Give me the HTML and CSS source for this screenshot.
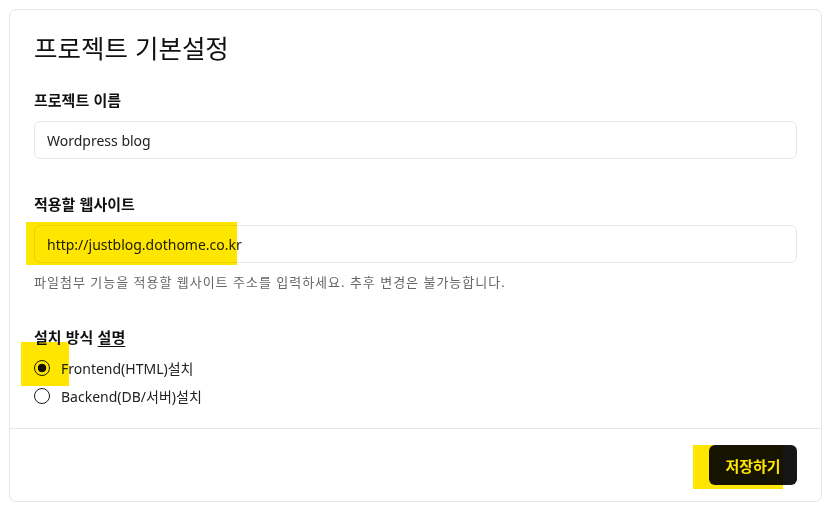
FILE: index.html
```html
<!DOCTYPE html>
<html lang="ko">
<head>
<meta charset="utf-8">
<link rel="stylesheet" href="styles.css">
</head>
<body>
<div class="card">
  <div class="card-body">
    <h1 class="title">프로젝트 기본설정</h1>
    <div class="field">
      <label class="label">프로젝트 이름</label>
      <div class="input">Wordpress blog</div>
    </div>
    <div class="field field-2">
      <label class="label">적용할 웹사이트</label>
      <div class="input">http://justblog.dothome.co.kr</div>
      <p class="help">파일첨부 기능을 적용할 웹사이트 주소를 입력하세요. 추후 변경은 불가능합니다.</p>
    </div>
    <div class="field field-3">
      <div class="label">설치 방식 <span class="u">설명</span></div>
      <label class="radio-row"><input type="radio" name="m" checked><span>Frontend(HTML)설치</span></label>
      <label class="radio-row"><input type="radio" name="m"><span>Backend(DB/서버)설치</span></label>
    </div>
  </div>
  <div class="card-footer">
    <button class="btn">저장하기</button>
  </div>
</div>
<div class="hl hl-input"></div>
<div class="hl hl-radio"></div>
<div class="hl hl-btn"></div>
</body>
</html>
```
FILE: styles.css
```css
* { box-sizing: border-box; }
body {
  margin: 0;
  background: #fff;
  font-family: "Noto Sans", "Noto Sans CJK KR", sans-serif;
  color: #111;
}
.card {
  margin: 9px;
  width: 813px;
  height: 493px;
  border: 1px solid #e6e6e6;
  border-radius: 7px;
  display: flex;
  flex-direction: column;
}
.card-body {
  padding: 20px 24px 0;
  flex: 1;
  border-bottom: 1px solid #e8e8e8;
}
.title {
  margin: 0;
  font-size: 25.5px;
  font-weight: 400;
  line-height: 33px;
  font-family: "Noto Sans CJK KR", sans-serif;
}
.field { margin-top: 27px; }
.field-2 { margin-top: 35px; }
.field-3 { margin-top: 36px; }
.label {
  display: block;
  font-size: 15px;
  font-weight: 700;
  line-height: 20px;
  font-family: "Noto Sans CJK KR", sans-serif;
}
.u { text-decoration: underline; text-underline-offset: 3px; text-decoration-thickness: 1px; }
.input {
  margin-top: 11px;
  height: 38px;
  border: 1px solid #e8e8e8;
  border-radius: 6px;
  padding: 0 12px;
  display: flex;
  align-items: center;
  font-size: 14px;
  color: #222;
}
.help {
  margin: 10px 0 0;
  font-size: 13px;
  line-height: 18px;
  color: #666;
  letter-spacing: 1px;
  font-family: "Noto Sans", "Noto Sans CJK KR", sans-serif;
}
.radio-row {
  display: flex;
  align-items: center;
  height: 20px;
  margin-top: 8px;
  font-size: 14px;
  color: #222;
}
.field-3 .radio-row:first-of-type { margin-top: 11px; }
.radio-row input {
  appearance: none;
  -webkit-appearance: none;
  margin: 0 11px 0 0;
  width: 16px;
  height: 16px;
  border: 1.5px solid #1a1a1a;
  border-radius: 50%;
  background: #fff;
  flex: none;
}
.radio-row input:checked {
  background: radial-gradient(circle, #111 0 4px, #fff 4.6px);
}
.card-footer {
  padding: 16px 24px;
  display: flex;
  justify-content: flex-end;
}
.btn {
  height: 40px;
  width: 88px;
  border: 0;
  border-radius: 6px;
  background: #161616;
  color: #fff;
  font-weight: 700;
  font-size: 15px;
  font-family: "Noto Sans CJK KR", sans-serif;
}
.hl {
  position: absolute;
  background: #ffe600;
  mix-blend-mode: multiply;
}
.hl-input { left: 26px; top: 222px; width: 211px; height: 43px; }
.hl-radio { left: 21px; top: 342px; width: 48px; height: 44px; }
.hl-btn { left: 693px; top: 445px; width: 90px; height: 44px; }
```
